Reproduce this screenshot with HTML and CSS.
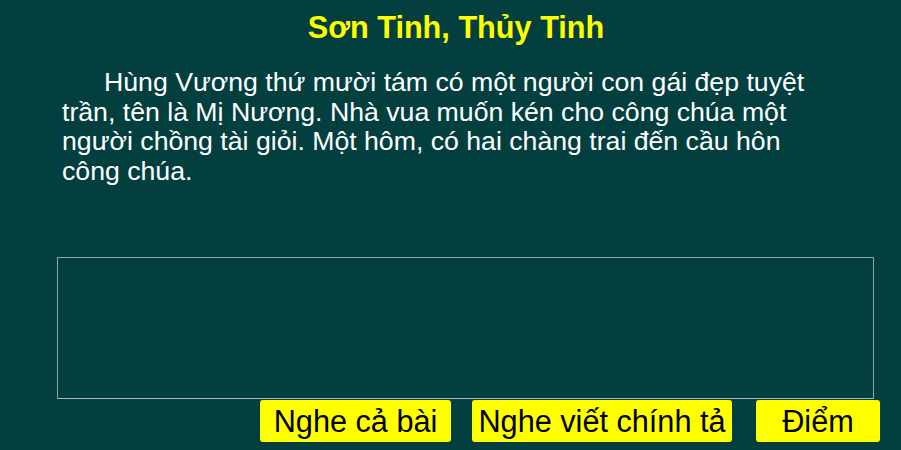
FILE: index.html
```html
<!DOCTYPE html>
<html lang="vi">
<head>
<meta charset="utf-8">
<title>Sơn Tinh, Thủy Tinh</title>
<link rel="stylesheet" href="styles.css">
</head>
<body>
<main class="lesson">
  <h1 class="lesson-title">Sơn Tinh, Thủy Tinh</h1>
  <p class="lesson-text">Hùng Vương thứ mười tám có một người con gái đẹp tuyệt trần, tên là Mị Nương. Nhà vua muốn kén cho công chúa một người chồng tài giỏi. Một hôm, có hai chàng trai đến cầu hôn công chúa.</p>
  <textarea class="answer-box" aria-label="Bài viết"></textarea>
  <div class="actions">
    <button class="btn btn-listen">Nghe cả bài</button>
    <button class="btn btn-dictation">Nghe viết chính tả</button>
    <button class="btn btn-score">Điểm</button>
  </div>
</main>
</body>
</html>
```
FILE: styles.css
```css
html, body {
  margin: 0;
  padding: 0;
  background: #033f3f;
  width: 901px;
  height: 450px;
  overflow: hidden;
}

.lesson {
  display: flex;
  flex-direction: column;
  font-family: "Liberation Sans", Arial, sans-serif;
}

.lesson-title {
  margin: 0;
  padding: 9px 0 0 11px;
  font-size: 23pt;
  line-height: 36px;
  font-weight: bold;
  color: #ffff00;
  text-align: center;
}

/* reading passage: fixed-height block so the answer box stays put */
.lesson-text {
  box-sizing: border-box;
  margin: 23px 0 0 62px;
  width: 768px;
  height: 189px;
  font-size: 20pt;
  line-height: 29.5px;
  color: #ffffff;
  text-indent: 42px;
}

.answer-box {
  box-sizing: border-box;
  display: block;
  margin: 0 0 0 57px;
  width: 817px;
  height: 142px;
  padding: 4px;
  background: transparent;
  border: 1px solid #8ea5a5;
  border-bottom-color: #a9b8b8;
  color: #ffffff;
  font-family: "Liberation Sans", Arial, sans-serif;
  font-size: 19pt;
  resize: none;
  outline: none;
}

.actions {
  display: flex;
  margin: 1px 0 0 260px;
}

.btn {
  height: 42px;
  padding: 0;
  border: none;
  border-radius: 3px;
  background: #ffff00;
  color: #000000;
  font-family: "Liberation Sans", Arial, sans-serif;
  font-size: 23pt;
  line-height: 42px;
  cursor: pointer;
}

.btn-listen { width: 191px; }
.btn-dictation { width: 260px; margin-left: 21px; }
.btn-score { width: 124px; margin-left: 24px; }
```
